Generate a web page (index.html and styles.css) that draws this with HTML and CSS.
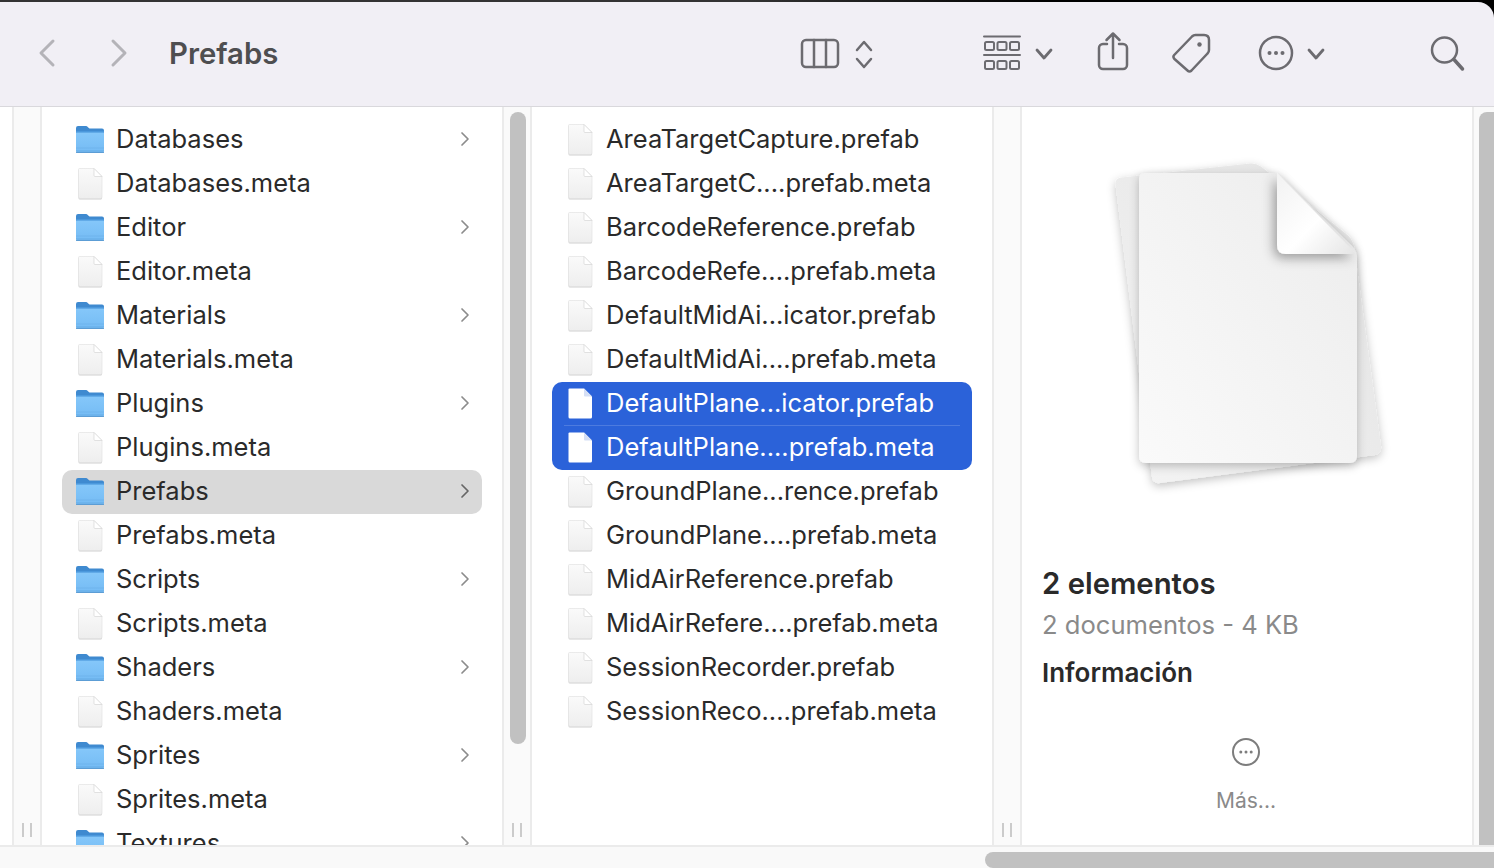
FILE: index.html
```html
<!DOCTYPE html>
<html lang="es">
<head>
    <meta charset="UTF-8">
    <title>Prefabs</title>
    <link rel="stylesheet" href="styles.css">
</head>
<body>
    <svg class="sprites" width="0" height="0">
        <defs>
            <linearGradient id="page-fill" x1="0" y1="0" x2="0" y2="1">
                <stop offset="0" stop-color="#fafafa"/>
                <stop offset="1" stop-color="#eeeeee"/>
            </linearGradient>
            <linearGradient id="folder-fill" x1="0" y1="0" x2="0" y2="1">
                <stop offset="0" stop-color="#86c8fa"/>
                <stop offset="1" stop-color="#74bbf4"/>
            </linearGradient>
            <symbol id="file" viewBox="0 0 30 34">
                <path d="M3.500 3.500a1 1 0 0 1 1-1H19L27 10.500V31a1.500 1.500 0 0 1-1.500 1.500H5A1.500 1.500 0 0 1 3.500 31z" fill="#cfcfcf" transform="translate(0 .9)"/>
                <path d="M3.500 3.500a1 1 0 0 1 1-1H19L27 10.500V31a1.500 1.500 0 0 1-1.500 1.500H5A1.500 1.500 0 0 1 3.500 31z" fill="url(#page-fill)" stroke="#e3e3e3" stroke-width=".7"/>
                <path d="M19 2.500V9.500a1 1 0 0 0 1 1H27z" fill="#fff" stroke="#d6d6d6" stroke-width=".7"/>
            </symbol>
            <symbol id="file-white" viewBox="0 0 30 34">
                <path d="M3.500 3.500a1 1 0 0 1 1-1H19L27 10.500V31a1.500 1.500 0 0 1-1.500 1.500H5A1.500 1.500 0 0 1 3.500 31z" fill="#fff"/>
                <path d="M19 2.500V9.500a1 1 0 0 0 1 1H27z" fill="#d5dff5"/>
            </symbol>
            <symbol id="folder" viewBox="0 0 30 30">
                <path d="M1 4a2 2 0 0 1 2-2h8c1.500 0 2 1.500 3.500 2.500H27a2 2 0 0 1 2 2V14H1z" fill="#3f8ad0"/>
                <path d="M1 9a2 2 0 0 1 2-2h24a2 2 0 0 1 2 2v18a2 2 0 0 1-2 2H3a2 2 0 0 1-2-2z" fill="url(#folder-fill)"/>
                <path d="M1 7.800h28" stroke="#4b98dc" stroke-width="1.600"/>
                <path d="M1 24h28M1 26.500h28" stroke="#68aee8" stroke-width=".6"/>
                <path d="M1 28.300h28" stroke="#5a9ad2" stroke-width="1.200"/>
            </symbol>
            <symbol id="chevron" viewBox="0 0 10 16">
                <path d="M2 2l6 6-6 6" fill="none" stroke="currentColor" stroke-width="1.700" stroke-linecap="round" stroke-linejoin="round"/>
            </symbol>
            <symbol id="grip" viewBox="0 0 10 14">
                <path d="M1 0v14M9 0v14" stroke="#bcbcbc" stroke-width="1.500"/>
            </symbol>
            <filter id="soft" x="-20%" y="-20%" width="140%" height="140%">
                <feDropShadow dx="0" dy="3" stdDeviation="5" flood-color="#000" flood-opacity=".24"/>
            </filter>
            <filter id="fold-shadow" x="-40%" y="-40%" width="180%" height="180%">
                <feDropShadow dx="-3" dy="4" stdDeviation="6" flood-color="#000" flood-opacity=".36"/>
            </filter>
            <linearGradient id="sheet-front" x1="1" y1="0" x2="0" y2="1">
                <stop offset="0" stop-color="#ececec"/>
                <stop offset="1" stop-color="#fafafa"/>
            </linearGradient>
            <linearGradient id="sheet-back" x1="1" y1="0" x2="0" y2="1">
                <stop offset="0" stop-color="#e2e2e2"/>
                <stop offset="1" stop-color="#f4f4f4"/>
            </linearGradient>
            <linearGradient id="sheet-fold" x1="0" y1="0" x2="1" y2="1">
                <stop offset="0" stop-color="#f2f2f2"/>
                <stop offset=".55" stop-color="#ffffff"/>
                <stop offset="1" stop-color="#e4e4e4"/>
            </linearGradient>
        </defs>
    </svg>

    <div class="toolbar">
        <svg class="tool tool-nav" width="20" height="44" viewBox="0 0 20 44"><path d="M17 10L5 22l12 12"/></svg>
        <svg class="tool tool-nav forward" width="20" height="44" viewBox="0 0 20 44"><path d="M3 10l12 12L3 34"/></svg>
        <div class="title">Prefabs</div>
        <div class="tools">
            <svg class="tool" width="40" height="44" viewBox="0 0 40 44"><rect x="2" y="9" width="36" height="27" rx="4"/><path d="M14 9v27M26 9v27"/></svg>
            <svg class="tool updown" width="20" height="44" viewBox="0 0 20 44"><path d="M3 19l7-8 7 8M3 28l7 8 7-8"/></svg>
            <svg class="tool group" width="40" height="44" viewBox="0 0 40 44"><path d="M2 5.500h36M2 24h36"/><rect x="3" y="11" width="9" height="8" rx="1.500"/><rect x="15.500" y="11" width="9" height="8" rx="1.500"/><rect x="28" y="11" width="9" height="8" rx="1.500"/><rect x="3" y="30" width="9" height="8" rx="1.500"/><rect x="15.500" y="30" width="9" height="8" rx="1.500"/><rect x="28" y="30" width="9" height="8" rx="1.500"/></svg>
            <svg class="tool caret" width="20" height="44" viewBox="0 0 20 44"><path d="M3 19l7 8 7-8"/></svg>
            <svg class="tool share" width="40" height="44" viewBox="0 0 40 44"><path d="M14 13h-4a4 4 0 0 0-4 4v17a4 4 0 0 0 4 4h20a4 4 0 0 0 4-4V17a4 4 0 0 0-4-4h-4M20 3v24M13.500 9L20 2.500 26.500 9"/></svg>
            <svg class="tool tag" width="42" height="44" viewBox="0 0 42 44"><path d="M21 5.500Q22.500 4 24.500 4H33q5 0 5 5v10q0 2-1.500 3.500l-16 17q-2 2-4 0L3.500 28q-2-2-.3-4z"/><circle class="dot" cx="28.500" cy="13.500" r="2.200"/></svg>
            <svg class="tool more" width="40" height="44" viewBox="0 0 40 44"><circle cx="20" cy="22" r="16"/><circle class="dot" cx="13.500" cy="22" r="2"/><circle class="dot" cx="20" cy="22" r="2"/><circle class="dot" cx="26.500" cy="22" r="2"/></svg>
            <svg class="tool caret-near" width="20" height="44" viewBox="0 0 20 44"><path d="M3 19l7 8 7-8"/></svg>
            <svg class="tool search" width="38" height="44" viewBox="0 0 38 44"><circle cx="16.500" cy="19" r="12.500"/><path class="handle" d="M26 28.500L34.500 38"/></svg>
        </div>
    </div>

    <div class="browser">
        <div class="stub"></div>
        <div class="gutter"><span></span><svg class="grip"><use href="#grip"/></svg></div>

        <div class="list">
            <div class="row"><svg class="ico"><use href="#folder"/></svg><span>Databases</span><svg class="arrow"><use href="#chevron"/></svg></div>
            <div class="row"><svg class="ico"><use href="#file"/></svg><span>Databases.meta</span></div>
            <div class="row"><svg class="ico"><use href="#folder"/></svg><span>Editor</span><svg class="arrow"><use href="#chevron"/></svg></div>
            <div class="row"><svg class="ico"><use href="#file"/></svg><span>Editor.meta</span></div>
            <div class="row"><svg class="ico"><use href="#folder"/></svg><span>Materials</span><svg class="arrow"><use href="#chevron"/></svg></div>
            <div class="row"><svg class="ico"><use href="#file"/></svg><span>Materials.meta</span></div>
            <div class="row"><svg class="ico"><use href="#folder"/></svg><span>Plugins</span><svg class="arrow"><use href="#chevron"/></svg></div>
            <div class="row"><svg class="ico"><use href="#file"/></svg><span>Plugins.meta</span></div>
            <div class="row current"><svg class="ico"><use href="#folder"/></svg><span>Prefabs</span><svg class="arrow"><use href="#chevron"/></svg></div>
            <div class="row"><svg class="ico"><use href="#file"/></svg><span>Prefabs.meta</span></div>
            <div class="row"><svg class="ico"><use href="#folder"/></svg><span>Scripts</span><svg class="arrow"><use href="#chevron"/></svg></div>
            <div class="row"><svg class="ico"><use href="#file"/></svg><span>Scripts.meta</span></div>
            <div class="row"><svg class="ico"><use href="#folder"/></svg><span>Shaders</span><svg class="arrow"><use href="#chevron"/></svg></div>
            <div class="row"><svg class="ico"><use href="#file"/></svg><span>Shaders.meta</span></div>
            <div class="row"><svg class="ico"><use href="#folder"/></svg><span>Sprites</span><svg class="arrow"><use href="#chevron"/></svg></div>
            <div class="row"><svg class="ico"><use href="#file"/></svg><span>Sprites.meta</span></div>
            <div class="row"><svg class="ico"><use href="#folder"/></svg><span>Textures</span><svg class="arrow"><use href="#chevron"/></svg></div>
        </div>

        <div class="gutter"><span class="thumb"></span><svg class="grip"><use href="#grip"/></svg></div>

        <div class="list">
            <div class="row"><svg class="ico"><use href="#file"/></svg><span>AreaTargetCapture.prefab</span></div>
            <div class="row"><svg class="ico"><use href="#file"/></svg><span>AreaTargetC....prefab.meta</span></div>
            <div class="row"><svg class="ico"><use href="#file"/></svg><span>BarcodeReference.prefab</span></div>
            <div class="row"><svg class="ico"><use href="#file"/></svg><span>BarcodeRefe....prefab.meta</span></div>
            <div class="row"><svg class="ico"><use href="#file"/></svg><span>DefaultMidAi...icator.prefab</span></div>
            <div class="row"><svg class="ico"><use href="#file"/></svg><span>DefaultMidAi....prefab.meta</span></div>
            <div class="selection">
                <div class="row"><svg class="ico"><use href="#file-white"/></svg><span>DefaultPlane...icator.prefab</span></div>
                <div class="row"><svg class="ico"><use href="#file-white"/></svg><span>DefaultPlane....prefab.meta</span></div>
            </div>
            <div class="row"><svg class="ico"><use href="#file"/></svg><span>GroundPlane...rence.prefab</span></div>
            <div class="row"><svg class="ico"><use href="#file"/></svg><span>GroundPlane....prefab.meta</span></div>
            <div class="row"><svg class="ico"><use href="#file"/></svg><span>MidAirReference.prefab</span></div>
            <div class="row"><svg class="ico"><use href="#file"/></svg><span>MidAirRefere....prefab.meta</span></div>
            <div class="row"><svg class="ico"><use href="#file"/></svg><span>SessionRecorder.prefab</span></div>
            <div class="row"><svg class="ico"><use href="#file"/></svg><span>SessionReco....prefab.meta</span></div>
        </div>

        <div class="gutter"><span></span><svg class="grip"><use href="#grip"/></svg></div>

        <div class="preview">
            <svg class="stack" width="320" height="360" viewBox="1086 140 320 360">
                <path filter="url(#soft)" fill="url(#sheet-back)" d="M1122 177.500L1250 163.500Q1256 163 1261 166.500L1345 233Q1352 238 1354 246L1381 446Q1382 453 1375 455L1160 483Q1153 484 1152 477L1115.500 184Q1115 178 1122 177.500z"/>
                <path filter="url(#soft)" fill="url(#sheet-front)" d="M1145 173H1277L1352 246Q1357 251 1357 258V456Q1357 463 1350 463H1146Q1139 463 1139 456V179Q1139 173 1145 173z"/>
                <path filter="url(#fold-shadow)" fill="url(#sheet-fold)" d="M1277 173L1356 254H1286Q1277 254 1277 245z"/>
            </svg>
            <div class="count">2 elementos</div>
            <div class="kind">2 documentos - 4 KB</div>
            <div class="info">Información</div>
            <svg class="more-ico" width="30" height="30" viewBox="0 0 30 30"><circle cx="15" cy="15" r="13"/><circle class="dot" cx="9.800" cy="15" r="1.500"/><circle class="dot" cx="15" cy="15" r="1.500"/><circle class="dot" cx="20.200" cy="15" r="1.500"/></svg>
            <div class="more-label">Más...</div>
        </div>

        <div class="vbar"><span></span></div>
    </div>

    <div class="hbar"><span></span></div>
</body>
</html>
```

FILE: styles.css
```css
html, body {
    margin: 0;
    height: 100%;
}
body {
    display: flex;
    flex-direction: column;
    overflow: hidden;
    padding-top: 2px;
    box-sizing: border-box;
    background: linear-gradient(to right, #333 0%, #333 50%, #000 70%);
    font-family: Inter, "Liberation Sans", sans-serif;
    color: #2a2a2a;
}
.sprites {
    position: absolute;
}

/* toolbar */
.toolbar {
    display: flex;
    align-items: center;
    flex: none;
    padding: 0 28px 2px 36px;
    box-sizing: border-box;
    height: 105px;
    background: #f1eff5;
    border-bottom: 1px solid #d9d8dc;
    border-top-right-radius: 16px;
}
.tool {
    flex: none;
    fill: none;
    stroke: #6c6b70;
    stroke-width: 2.5;
    stroke-linecap: round;
    stroke-linejoin: round;
}
.tool-nav {
    stroke: #b4b3b8;
    stroke-width: 3;
}
.forward {
    margin-left: 54px;
}
.title {
    margin-left: 39px;
    font-size: 29.3px;
    font-weight: 600;
    color: #4e4e50;
}
.tools {
    display: flex;
    align-items: center;
    margin-left: auto;
}
.dot {
    fill: #6c6b70;
    stroke: none;
}
.updown { margin-left: 14px; }
.group { margin-left: 108px; stroke-width: 2; }
.caret { margin-left: 12px; stroke-width: 2.8; }
.share { margin-left: 39px; }
.tag { margin-left: 38px; }
.more { margin-left: 43px; }
.caret-near { margin-left: 10px; stroke-width: 2.8; }
.search { margin-left: 102px; }
.search .handle { stroke-width: 3.5; }

/* columns */
.browser {
    display: flex;
    flex: 1;
    min-height: 0;
    background: #fff;
}
.stub {
    flex: none;
    width: 12px;
}
.gutter {
    display: flex;
    flex: none;
    flex-direction: column;
    justify-content: space-between;
    align-items: center;
    width: 30px;
    box-sizing: border-box;
    padding: 5px 0 8px;
    background: #fafafa;
    border-left: 2px solid #ebebeb;
    border-right: 2px solid #ebebeb;
}
.thumb {
    width: 16px;
    height: 632px;
    margin-left: 2px;
    border-radius: 8px;
    background: #c1c1c1;
}
.grip {
    width: 10px;
    height: 14px;
}
.list {
    flex: none;
    width: 460px;
    box-sizing: border-box;
    padding-top: 11px;
    overflow: hidden;
}
.row {
    display: flex;
    align-items: center;
    gap: 11px;
    height: 44px;
    margin: 0 20px;
    padding: 0 12px 0 13px;
    font-size: 25.5px;
    white-space: nowrap;
}
.row span {
    padding-bottom: 3px;
}
.ico {
    flex: none;
    width: 30px;
    height: 34px;
    margin-top: -2px;
}
.arrow {
    width: 10px;
    height: 16px;
    margin: -2px 0 0 auto;
    color: #8c8c8c;
}
.current {
    background: #d9d9d9;
    border-radius: 10px;
}
.current .arrow {
    color: #666;
}
.selection {
    margin: 0 20px;
    background: #2b62d9;
    border-radius: 10px;
    color: #fff;
}
.selection .row {
    position: relative;
    margin: 0;
}
.selection .row:first-child::after {
    content: "";
    position: absolute;
    left: 12px;
    right: 12px;
    bottom: 0;
    height: 1px;
    background: rgba(255, 255, 255, .16);
}

/* preview */
.preview {
    display: flex;
    flex: none;
    flex-direction: column;
    width: 450px;
    box-sizing: border-box;
    padding: 33px 0 0 20px;
}
.stack {
    align-self: center;
    margin-left: -22px;
}
.count {
    margin-top: 66px;
    font-size: 29.3px;
    line-height: 36px;
    font-weight: 600;
}
.kind {
    margin-top: 5px;
    font-size: 25.6px;
    line-height: 36px;
    color: #8a8a8a;
}
.info {
    margin-top: 12px;
    font-size: 26px;
    line-height: 36px;
    font-weight: 600;
}
.more-ico {
    align-self: center;
    margin: 46px 0 0 -22px;
    fill: none;
    stroke: #7d7d7d;
    stroke-width: 2;
}
.more-ico .dot {
    fill: #7d7d7d;
}
.more-label {
    align-self: center;
    margin: 21px 0 0 -22px;
    font-size: 21px;
    line-height: 26px;
    color: #8a8a8a;
}
.vbar {
    flex: 1;
    display: flex;
    justify-content: flex-end;
    padding-top: 5px;
    background: #fafafa;
    border-left: 2px solid #ebebeb;
}
.vbar span {
    width: 15px;
    border-radius: 8px 0 0 0;
    background: #c1c1c1;
}

/* bottom scrollbar */
.hbar {
    display: flex;
    flex: none;
    justify-content: flex-end;
    height: 23px;
    box-sizing: border-box;
    padding-top: 5px;
    background: #f9f9f9;
    border-top: 2px solid #ebebeb;
}
.hbar span {
    width: 509px;
    border-radius: 8px 0 0 8px;
    background: #c1c1c1;
}
```
